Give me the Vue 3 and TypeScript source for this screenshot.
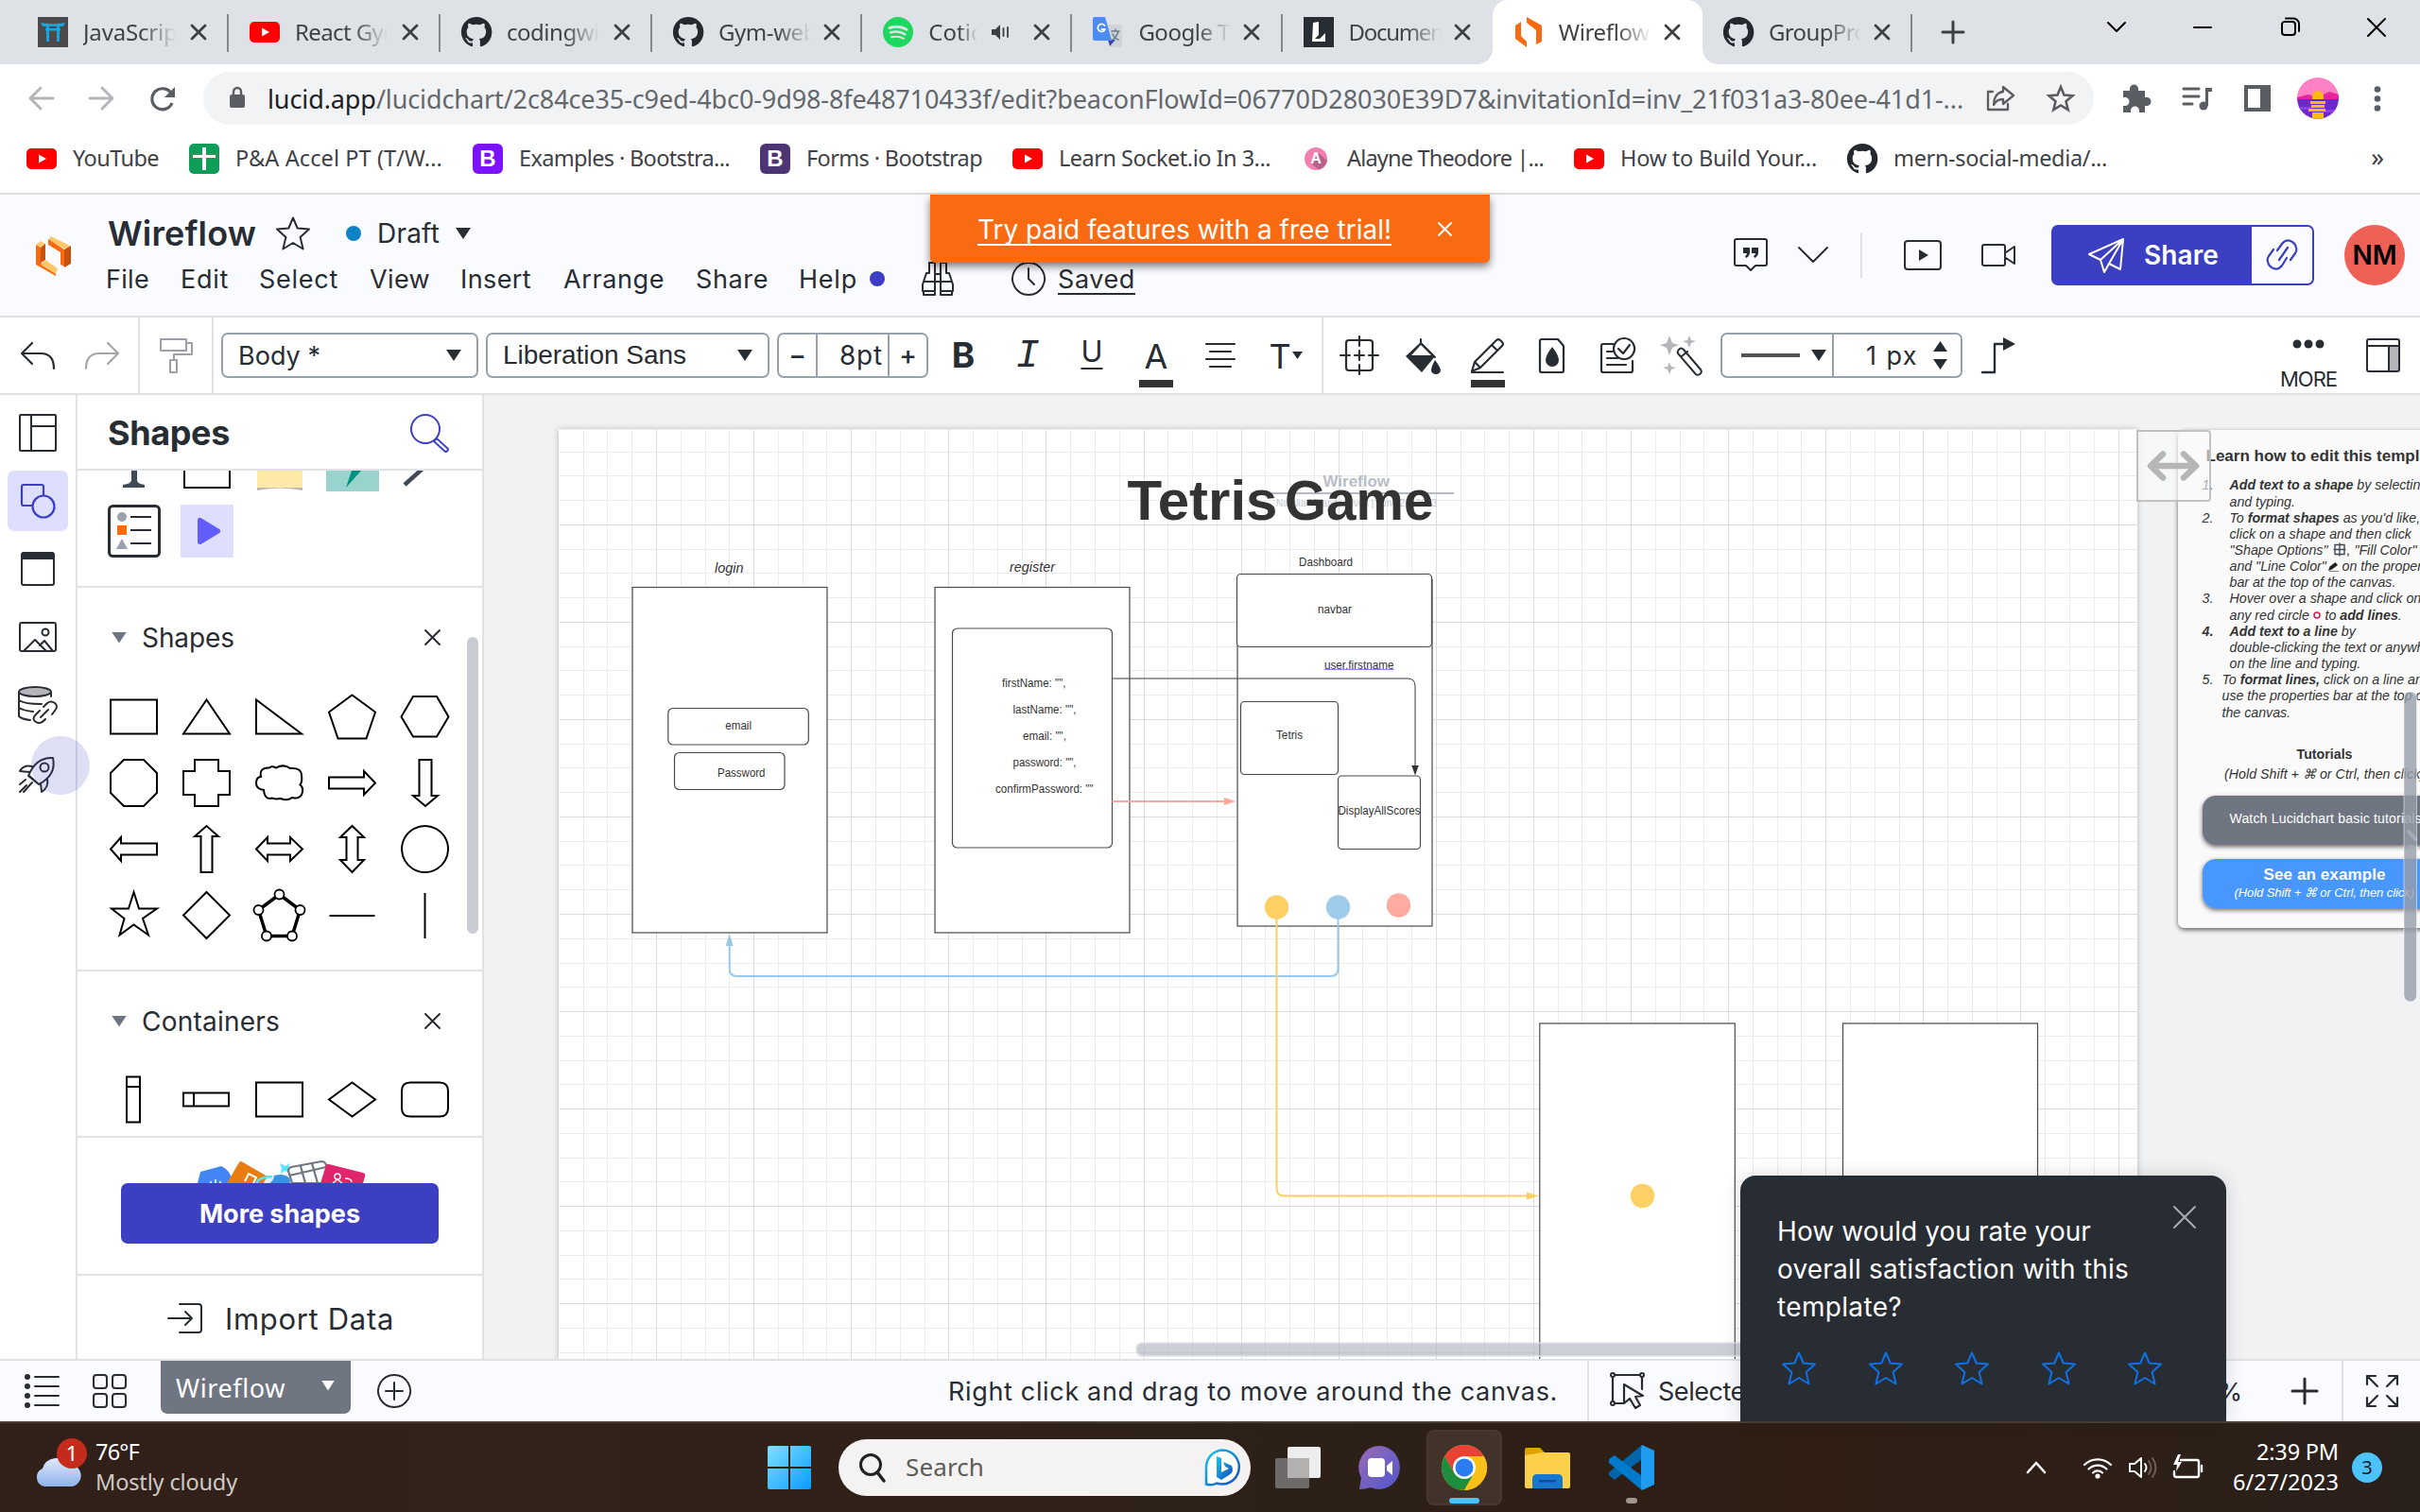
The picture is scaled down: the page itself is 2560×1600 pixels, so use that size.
<script setup lang="ts">
import { h, type FunctionalComponent, type ObjectDirective } from 'vue'

/* Tracks a label out (or in) so that it fills its designed width with any fallback font. */
const vFit: ObjectDirective<HTMLElement, number> = {
  mounted(el, { value }) {
    const chars = (el.textContent ?? '').trim().length
    const natural = el.getBoundingClientRect().width
    el.style.letterSpacing = `${(value - natural) / chars}px`
  },
}

const stroke = (d: string, w = 2, c = '#282c33') =>
  `<path fill="none" stroke="${c}" stroke-width="${w}" stroke-linejoin="round" stroke-linecap="round" d="${d}"/>`
const STAR = 'M18 1.500l4.700 11 12.300 1-9.400 8.500 3 12.500L18 28l-10.600 6.500 3-12.500L1 13.500l12.300-1z'

const icons: Record<string, string> = {
  github: '<path fill="#24292f" d="M16 0a16 16 0 0 0-5.100 31.200c.8.1 1.100-.4 1.100-.8v-3c-4.500 1-5.400-1.900-5.400-1.900-.7-1.800-1.800-2.300-1.800-2.300-1.400-1 .1-1 .1-1 1.600.1 2.500 1.700 2.500 1.700 1.400 2.400 3.700 1.700 4.600 1.300.2-1 .6-1.700 1-2.100-3.500-.4-7.300-1.800-7.300-7.900 0-1.700.6-3.200 1.700-4.300-.2-.4-.7-2 .1-4.200 0 0 1.300-.4 4.400 1.600a15 15 0 0 1 8 0c3.100-2 4.400-1.600 4.400-1.600.9 2.200.3 3.800.2 4.200 1 1.100 1.600 2.600 1.600 4.300 0 6.200-3.700 7.500-7.300 7.900.6.500 1.100 1.500 1.100 3v4.400c0 .4.3.9 1.100.8A16 16 0 0 0 16 0z"/>',
  youtube: '<rect y="5" width="32" height="22" rx="5" fill="#f00"/><path fill="#fff" d="M13 11.500v9l8-4.500z"/>',
  torii: '<rect width="32" height="32" fill="#4c4a4b"/><path fill="#16a5e0" d="M3 6c8 1.500 18 1.500 26 0l-2 4H5zM8 12h16v2.500H8zM9 10h3v16H9zM20 10h3v16h-3z"/>',
  spotify: '<circle cx="16" cy="16" r="16" fill="#1ed760"/>' +
    stroke('M7 11.500c6-1.800 13-1.200 18 1.800', 3, '#dee1e6') + stroke('M8 16.500c5-1.500 11-.8 15.500 1.800', 2.500, '#dee1e6') + stroke('M9 21.300c4.500-1.200 9-.7 13 1.500', 2, '#dee1e6'),
  translate: '<path fill="#d0d3d9" d="M12 8h17a2 2 0 0 1 2 2v20a2 2 0 0 1-2 2H19z"/><path fill="#3949ab" d="M16 24h8l-6 7z"/><path fill="#4c8bf5" d="M2 0h11l7 25H2a2 2 0 0 1-2-2V2a2 2 0 0 1 2-2z"/>' +
    stroke('M12.500 9a4 4 0 1 0 .5 4H9.500', 1.800, '#fff') + stroke('M20 15h8M24 13v2M27 15c-1 4-3 7-6 9M21 18c1 2 3 5 6 6', 1.500, '#6b7c8c'),
  docs: '<rect width="32" height="32" fill="#282c33"/><path fill="#fff" d="M10 6l6-1v14l-4 4h11v3H9z"/><path fill="#fff" d="M17 23l6-6v6z"/>',
  lucidTab: '<path fill="#f96b13" d="M2 9l6-4v15l6 6v6L2 23zM14 0l16 9v17l-6 3V14L14 6z"/>',
  sheets: '<rect width="32" height="32" rx="5" fill="#0f9d58"/><path fill="#fff" d="M4 12h10V4h4v8h10v3H18v13h-4V15H4z"/>',
  bs1: '<rect width="32" height="32" rx="6" fill="#7c12fb"/>',
  bs2: '<rect width="32" height="32" rx="6" fill="#4d3574"/>',
  alayne: '<circle cx="12" cy="12" r="12" fill="#f180b0"/><path fill="#b9608c" d="M15 6l9 8a12 12 0 0 1-9 9.500L8 18z"/>',
  tabX: stroke('M3 3l14 14M17 3L3 17', 2.800, '#3c4043'),
  audio: '<path fill="#3c4043" d="M0 7h4l5-5v16l-5-5H0z"/>' + stroke('M12.500 6v8M17 5v10', 1.800, '#3c4043'),
  plus: stroke('M12 1v22M1 12h22', 3, '#3c4043'),
  chevWin: stroke('M1 2l9 9 9-9', 2, '#000'),
  min: stroke('M1 2h18', 2, '#000'),
  restore: stroke('M2 7a3 3 0 0 1 3-2h8a3 3 0 0 1 3 3v8a3 3 0 0 1-3 3H5a3 3 0 0 1-3-3zM6 1.500h8a6 6 0 0 1 6 6V15', 2, '#000'),
  winX: stroke('M1 1l18 18M19 1L1 19', 2, '#000'),
  back: stroke('M26 13H3M13 2L2 13l11 11', 3, '#b4b6b9'),
  fwd: stroke('M1 13h23M14 2l11 11-11 11', 3, '#b4b6b9'),
  reload: '<path fill="none" stroke="#5a5d61" stroke-width="3.200" d="M23.500 8.500A11 11 0 1 0 24 18"/><path fill="#5a5d61" d="M27 1v11H16z"/>',
  lock: '<rect x="0" y="8" width="16" height="14" rx="2" fill="#5a5d61"/><path fill="none" stroke="#5a5d61" stroke-width="2.400" d="M4 9V5a4 4 0 0 1 8 0v4"/>',
  share: stroke('M7 7H2v19h21v-6', 2.300, '#5a5d61') + stroke('M18 2l11 9-11 9v-5c-5 0-8 2-10 6 0-7 3-13 10-14z', 2.300, '#5a5d61'),
  starUrl: '<path fill="none" stroke="#5a5d61" stroke-width="2.600" d="M15 3l3.500 8.500 9 .7-7 6 2.200 9L15 22.500l-7.700 4.700 2.200-9-7-6 9-.7z"/>',
  puzzle: '<path fill="#5a5d61" d="M2 8h7V6a4.500 4.500 0 0 1 9 0v2h7v7h2a4.500 4.500 0 0 1 0 9h-2v7h-6v-2a4.500 4.500 0 0 0-9 0v2H2v-7h2a4.500 4.500 0 0 0 0-9H2z"/>',
  media: stroke('M2 3h16M2 11h16M2 19h9', 3, '#5a5d61') + '<circle cx="23" cy="21" r="4.500" fill="#5a5d61"/><path fill="#5a5d61" d="M25 2h7v4h-4v15h-3z"/>',
  side: '<path fill="#5a5d61" fill-rule="evenodd" d="M0 0h28v28H0zM4 4v20h13V4z"/>',
  avatar: '<clipPath id="av"><circle cx="22" cy="22" r="22"/></clipPath><g clip-path="url(#av)"><path fill="#ff80c4" d="M0 0h44v24H0z"/><path fill="#e5239a" d="M0 21l12-3 10 3 12-6 10 3v6H0z"/><path fill="#6d28c9" d="M0 23h44v21H0z"/><path fill="#8f3fe0" d="M0 31h16v3H0zM28 34h16v3H28z"/><path fill="#fdb813" d="M16 23v-3a6 6 0 0 1 12 0v3zM14 25h16v3H14zM15 29h14v3H15zM12 33h18v3H12zM16 37h12v7H16z"/></g>',
  dotsV: '<g fill="#5a5d61"><circle cx="4" cy="3.500" r="3.300"/><circle cx="4" cy="13.500" r="3.300"/><circle cx="4" cy="23.500" r="3.300"/></g>',
  lucid: '<path fill="#ffc76b" d="M0 9l5-4 5 3-5 4zM16 0l20 10-4 4L13 4z"/><path fill="#f96b13" d="M0 9l5 3v16l-5-4zM13 3l17 11v18l-4-2V17L13 9zM5 28l16 8v6L0 30v-6z"/><path fill="#c9500a" d="M5 12l5-4v17l-5 3zM30 14l7-4v19l-7 4z"/><path fill="#ffc76b" d="M10 25l13 9-2 6L5 30z"/>',
  star: stroke(STAR),
  starBlue: stroke(STAR, 2, '#1071e5'),
  binoculars: stroke('M9 2h6v30H2V25l4-12h3zM9 2v11M27 2h-6v30h13V25l-4-12h-3zM27 2v11M15 14h6M15 22h6M3 22h30M15 33v3H3v-4M21 33v3h12v-4'),
  clock: stroke('M18 1a17 17 0 1 0 .1 0M18 7v11l6 6'),
  bannerX: stroke('M2 2l13 13M15 2L2 15', 2, '#fff'),
  comment: stroke('M3 1h30q2 0 2 2v24q0 2-2 2H23l-5 5-5-5H3q-2 0-2-2V3q0-2 2-2z') + '<path fill="#282c33" d="M10 10h7v5q0 4-4 6l-1-2q2-1 2-3h-4zM19 10h7v5q0 4-4 6l-1-2q2-1 2-3h-4z"/>',
  chev: stroke('M1 1l15 15L31 1'),
  present: stroke('M4 1h32q3 0 3 3v24q0 3-3 3H4q-3 0-3-3V4q0-3 3-3z') + '<path fill="#282c33" d="M16 10l10 6-10 6z"/>',
  video: stroke('M3 1h20q2 0 2 2v18q0 2-2 2H3q-2 0-2-2V3q0-2 2-2zM26 9l9-6v18l-9-6'),
  plane: stroke('M38 2L2 18l12 6zM38 2L14 24l4 13 5-9zM38 2l-3 32-12-6z', 2, '#fff'),
  link: stroke('M15 23l9-13M13 13l5-7q4-5 9-3t6 7q1 3-1 6l-5 7M23 21l-5 8q-4 5-9 3t-6-7q-1-3 1-6l5-7', 2.200, '#3c3fc1'),
  undo: stroke('M12 2L1 13l11 11M2 13h19q14 0 14 16', 2.200),
  redo: stroke('M24 2l11 11-11 11M34 13H15Q1 13 1 29', 2.200, '#a3a6ab'),
  painter: stroke('M2 2h27v12H2zM29 6h6v12H16v6M12 24h7v13h-7z', 2, '#9c9fa5'),
  align: stroke('M2 3h30M6 11h22M2 19h30M6 27h22', 2.200),
  shapeOpt: stroke('M9 4h22q3 0 3 3v26q0 3-3 3H9q-3 0-3-3V7q0-3 3-3zM20 0v10M20 30v10M0 20h10M30 20h10M15 20h10M20 15v10', 2.200),
  fill: stroke('M16 2v12M16 6l15 15', 2) + '<path fill="#282c33" d="M0 20L16 5l15 15-14 17zM31 24q6 8 6 11a5 4 0 0 1-10 0q0-4 4-11z"/><path fill="#fff" d="M16 8l11 11H6z"/>',
  pencil: stroke('M2 36l3-10L28 3q2-2 4 0l2 2q2 2 0 4L11 32zM5 26l6 6M23 8l6 6M2 37h33', 2.200),
  page: stroke('M3 1h17l6 7v26q0 2-2 2H3q-2 0-2-2V3q0-2 2-2z', 2.200) + '<path fill="#282c33" d="M14 9q7 9 7 14a7 7 0 0 1-14 0q0-5 7-14z"/>',
  check: stroke('M15 8H4q-2 0-2 2v26q0 2 2 2h29q2 0 2-2V26M8 16h6M8 23h12M8 30h20', 2.200) + stroke('M26 2a11 11 0 1 0 .1 0M20 13l5 5 7-9', 2.200),
  wand: '<path fill="#b4b6ba" d="M9 0l3 8 7 2-7 3-3 8-3-8-7-3 7-2zM30 0l2 5 5 1-5 2-2 5-2-5-5-2 5-1zM9 28l2 5 5 1-5 2-2 5-2-5-5-2 5-1z"/>' + stroke('M19 15q2-3 5 0l18 21q2 3-1 5t-5-1L18 19q-1-2 1-4zM22 22l6-5', 2),
  line: '<path fill="#555" d="M0 0h62v4H0z"/>',
  spin: '<path fill="#282c33" d="M7.500 0L15 11H0zM0 19h15L7.500 30z"/>',
  elbow: stroke('M2 37h13V7h12', 2.400) + '<path fill="#282c33" d="M24 0l13 7-13 7z"/>',
  dots3: '<g fill="#282c33"><circle cx="5" cy="5" r="4.500"/><circle cx="17" cy="5" r="4.500"/><circle cx="29" cy="5" r="4.500"/></g>',
  panel: '<path fill="#b4b6ba" d="M25 8h10v27H25z"/>' + stroke('M3 1h30q2 0 2 2v30q0 2-2 2H3q-2 0-2-2V3q0-2 2-2zM1 8h34M24 8v27'),
  layout: stroke('M3 1h35q1 0 1 1v36q0 1-1 1H2q-1 0-1-1V2q0-1 1-1zM13 1v38M13 13h26'),
  shapes: stroke('M24 12V3q0-2-2-2H3Q1 1 1 3v18q0 2 2 2h9', 2.200, '#3c3fc1') + '<circle cx="24" cy="24" r="11.500" fill="none" stroke="#3c3fc1" stroke-width="2.200"/>',
  window: stroke('M3 1h30q2 0 2 2v30q0 2-2 2H3q-2 0-2-2V3q0-2 2-2z') + '<path fill="#282c33" d="M1 1h34v7H1z"/>',
  image: stroke('M3 1h34q2 0 2 2v26q0 2-2 2H3q-2 0-2-2V3q0-2 2-2zM5 31l12-12 12 12M22 25l5-5 9 11') + '<circle cx="28" cy="11" r="3.500" fill="none" stroke="#282c33" stroke-width="2"/>',
  data: '<ellipse cx="18" cy="6" rx="17" ry="5" fill="#b4b6ba"/>' + stroke('M1 6v26q3 3 12 4M35 6v5M1 6a17 5 0 0 0 34 0a17 5 0 0 0-34 0M1 15q6 4 24 4M1 23q5 3 15 4M24 33l8-8M27 22l4-4q4-3 8 0t0 8l-3 4M29 35q-5 6-10 3t0-8l4-4'),
  rocket: stroke('M36 2q4 18-15 28l-11-9Q18 1 36 2zM14 11Q5 9 1 16l10 1M23 29l1 9q8-5 6-14M11 21l10 9M7 25l-6 5M14 28L5 38M8 31l-7 7') + '<circle cx="27" cy="12" r="4.500" fill="none" stroke="#282c33" stroke-width="2"/>',
  search: '<circle cx="16" cy="16" r="15" fill="none" stroke="#3c3fc1" stroke-width="2"/>' + stroke('M25 29l3-3 12 11q0 3-3 3z', 1.800, '#3c3fc1'),
  x: stroke('M1 1l15 15M16 1L1 16'),
  xLight: stroke('M1 1l22 22M23 1L1 23', 2, '#a9adb4'),
  import: stroke('M12 1h20q3 0 3 3v24q0 3-3 3H12M0 16h24M18 9l7 7-7 7'),
  list: stroke('M11 3h25M11 13h25M11 23h25M11 33h25') + '<g fill="#282c33"><circle cx="3" cy="3" r="3"/><circle cx="3" cy="13" r="3"/><circle cx="3" cy="23" r="3"/><circle cx="3" cy="33" r="3"/></g>',
  grid4: stroke('M4 1h8q3 0 3 3v8q0 3-3 3H4q-3 0-3-3V4q0-3 3-3zM24 1h8q3 0 3 3v8q0 3-3 3h-8q-3 0-3-3V4q0-3 3-3zM4 21h8q3 0 3 3v8q0 3-3 3H4q-3 0-3-3v-8q0-3 3-3zM24 21h8q3 0 3 3v8q0 3-3 3h-8q-3 0-3-3v-8q0-3 3-3z'),
  plusCircle: stroke('M18 1a17 17 0 1 0 .1 0M18 9v18M9 18h18'),
  select: stroke('M5 3h26M3 5v26M34 5v13M5 33h9M15 13v20l6-5 6 10 5-3-5-9 8-1z', 2.200) + '<g fill="#fafbfe" stroke="#282c33" stroke-width="2"><circle cx="3" cy="3" r="2"/><circle cx="34" cy="3" r="2"/><circle cx="3" cy="33" r="2"/></g>',
  zoomIn: stroke('M14 1v26M1 14h26', 3),
  full: stroke('M13 13L2 2M2 11V2h9M23 13L34 2M25 2h9v9M13 23L2 34M2 25v9h9M23 23l11 11M25 34h9v-9', 2.200),
  windows: '<linearGradient id="wg" x1="0" y1="0" x2="1" y2="1"><stop stop-color="#7fe0ff"/><stop offset="1" stop-color="#0a9bff"/></linearGradient><path fill="url(#wg)" d="M2 0h20v22H0V2q0-2 2-2zM24 0h20q2 0 2 2v20H24zM0 24h22v22H2q-2 0-2-2zM24 24h22v20q0 2-2 2H24z"/>',
  glass: '<circle cx="15" cy="12" r="10.500" fill="none" stroke="#222" stroke-width="3"/>' + stroke('M22 20l7 9', 3.500, '#222'),
  bing: '<linearGradient id="bg" x1="0" y1="0" x2="1" y2="1"><stop stop-color="#17c8ee"/><stop offset="1" stop-color="#1747b8"/></linearGradient><path fill="#fff" stroke="url(#bg)" stroke-width="2.500" d="M20 1.500a18 18 0 1 1-7 35q-5 3-11 1V20A18 18 0 0 1 20 1.500z"/><path fill="url(#bg)" d="M13 8l5 2v15l8-4-4-2-2-5 9 4q3 7-3 10l-8 5-5-3z"/>',
  taskview: '<rect x="13" width="35" height="33" rx="2" fill="#ededed"/><rect y="12" width="36" height="32" rx="2" fill="#6d6a69"/><path fill="#b3b1b0" d="M13 12h23v21H13z"/>',
  chat: '<linearGradient id="cg" x1="0" y1="0" x2="1" y2="1"><stop stop-color="#9a6cb4"/><stop offset="1" stop-color="#5156cf"/></linearGradient><path fill="url(#cg)" d="M22 0a22 23 0 1 1-10 44q-6 2-12 2l2-12A22 23 0 0 1 22 0z"/><rect x="9" y="13" width="18" height="20" rx="4" fill="#fff"/><path fill="#fff" d="M29 21l6-5v15l-6-5z"/>',
  chrome: '<circle cx="24" cy="24" r="24" fill="#fbc116"/><path fill="#ea4335" d="M3.200 12A24 24 0 0 1 44.800 12H24L13.600 30z"/><path fill="#1e8e3e" d="M3.200 12A24 24 0 0 0 24 48l10.400-18H13.600z"/><path fill="#fbc116" d="M44.800 12A24 24 0 0 1 24 48l10.400-18L24 12z"/><circle cx="24" cy="24" r="12" fill="#fff"/><circle cx="24" cy="24" r="9.500" fill="#2a7df0"/>',
  folder: '<path fill="#e0a200" d="M2 0h14l5 5v5H0V2q0-2 2-2z"/><path fill="#fdd04a" d="M0 8l18-3h28q2 0 2 2v34q0 2-2 2H2q-2 0-2-2z"/><path fill="#1677cf" d="M8 43V33q0-5 5-5h22q5 0 5 5v10z"/><path fill="#0a4f97" d="M15 34h18v2.500H15z"/>',
  vscode: '<path fill="#0065a9" d="M35 0v15L6 37l-6-5V29z"/><path fill="#007acc" d="M0 19v-4l6-4 29 22v15z"/><path fill="#1f9cf0" d="M35 0l13 6v36l-13 6-1-4V4z"/>',
  weather: '<circle cx="34" cy="15" r="12" fill="#f08a1c"/><linearGradient id="wc" x1="0" y1="0" x2="0" y2="1"><stop stop-color="#dfe9fb"/><stop offset="1" stop-color="#8fb2ee"/></linearGradient><path fill="url(#wc)" d="M10 39a10 10 0 0 1-2-19A15 15 0 0 1 35 16a11.500 11.500 0 0 1 4 23z"/>',
  chevUp: stroke('M2 12l9-10 9 10', 2.600, '#fff'),
  wifi: stroke('M2 9a20 20 0 0 1 28 0M6.500 13.500a13.500 13.500 0 0 1 19 0M11 17.500a7 7 0 0 1 10 0', 2.200, '#fff') + '<circle cx="16" cy="21" r="2.600" fill="#fff"/>',
  volume: stroke('M2 8h5l7-6v20l-7-6H2zM18 8q3 4 0 8', 2, '#fff') + stroke('M22 5q5 7 0 14M26 2q7 10 0 20', 2, '#6b5d54'),
  battery: stroke('M9 6h17q2 0 2 2v14q0 2-2 2H4q-2 0-2-2v-4M31 12v6', 2.400, '#fff') + '<path fill="#fff" d="M6 0l-5 11h4l-1 7 6-10H6l3-8z"/>',
}

const Ic: FunctionalComponent<{ n: string; w: number; ht?: number }> = (p) =>
  h('svg', { width: p.w, height: p.ht ?? p.w, viewBox: `0 0 ${p.w} ${p.ht ?? p.w}`, innerHTML: icons[p.n] })
Ic.props = ['n', 'w', 'ht']

const tabs = [
  { t: 'JavaScript', i: 'torii', w: 108 }, { t: 'React Gym', i: 'youtube', w: 115 }, { t: 'codingwit', i: 'github', w: 106 },
  { t: 'Gym-web', i: 'github', w: 104 }, { t: 'Cotidi', i: 'spotify', w: 66, audio: true }, { t: 'Google Tr', i: 'translate', w: 105 },
  { t: 'Documen', i: 'docs', w: 100 }, { t: 'Wireflow:', i: 'lucidTab', w: 102, active: true }, { t: 'GroupProj', i: 'github', w: 110 },
]
const bookmarks = [
  { t: 'YouTube', i: 'youtube', w: 91 }, { t: 'P&A Accel PT (T/W...', i: 'sheets', w: 219 }, { t: 'Examples · Bootstra...', i: 'bs1', w: 223, b: true },
  { t: 'Forms · Bootstrap', i: 'bs2', w: 186, b: true }, { t: 'Learn Socket.io In 3...', i: 'youtube', w: 224 },
  { t: 'Alayne Theodore |...', i: 'alayne', w: 208, a: true }, { t: 'How to Build Your...', i: 'youtube', w: 208 }, { t: 'mern-social-media/...', i: 'github', w: 226 },
]
const menu: [string, number][] = [['File', 46], ['Edit', 51], ['Select', 84], ['View', 64], ['Insert', 75], ['Arrange', 107], ['Share', 77], ['Help', 62]]

const shapePaths = [
  'M3 9.500h49v36H3z', 'M27.500 9.500l24.500 36H3z', 'M3 9.500v36h48z', 'M27.500 4.500l24.500 18-9.500 28h-30L3 22.500z', 'M15 6h25l12.500 21.500L40 48.500H15L2.500 27.500z',
  'M17 3h21l14 14v21L38 52H17L3 38V17z', 'M15 3h25v12h12v25H40v12H15V40H3V15h12z',
  'M8 21Q6 11 17 11.500Q19 9 24 11.500Q32 7 39 12Q51 11 51 20Q52 26 49.500 29.500Q54 33 51 40Q48 45 41 43Q36 47 29 44Q22 45 20 43.500Q12 46 11 35Q3 34 3 28Q3 21 8 21z',
  'M3 21.500h37V15l12 12.500L40 40v-6.500H3z', 'M21.500 3h13v38H41L28 52 15 41h6.500z',
  'M52 21.500H14V15L3 27.500 14 40v-6.500h38z', 'M21.500 52h12V14H40L27.500 3 15 14h6.500z', 'M3 27.500L15 15v6.500h24V15l13 12.500L39 40v-6.500H15V40z',
  'M27.500 3L40 15h-6.500v24H40L27.500 52 15 39h6.500V15H15z', 'M27.500 3a24.500 24.500 0 1 0 .1 0z',
  'M27.500 3l5.500 17.500h19L37 31l6 17.500-15.500-11-15 11 5-17.500L4 20.500h18z', 'M27.500 3L52 27.500 27.500 52 3 27.500z',
  '', 'M3.500 28h48', 'M27.500 4v48',
]
const containerPaths = ['M20 3.500h14v48H20zM20 14h14', 'M3 20.500h48v14H3zM14 20.500v14', 'M3 9.500h49v36H3z', 'M27.500 9.500L52 27.500l-24.500 18L3 27.500z', 'M12 9.500h31q9 0 9 9v18q0 9-9 9H12q-9 0-9-9v-18q0-9 9-9z']
const polyNodes: [number, number][] = [[27.500, 5.500], [49.500, 22], [41, 49.500], [14, 49.500], [5.500, 22]]

const range = (n: number) => Array.from({ length: n }, (_, k) => k + 1)
const gridV = range(64).map((k) => ({ p: Math.floor(591.4 + k * 25.775) + 0.5, major: k % 4 === 0 }))
const gridH = range(38).map((k) => ({ p: Math.floor(452.3 + k * 25.76) + 0.5, major: k % 4 === 0 }))

interface Label { t: string; x: number; y: number; w: number; c?: string }
const labels: Label[] = [
  { t: 'login', x: 756, y: 605.5, w: 30.5, c: 'it big' }, { t: 'register', x: 1068, y: 605, w: 48, c: 'it big' },
  { t: 'email', x: 767.3, y: 772, w: 27.7 }, { t: 'Password', x: 759, y: 821.5, w: 50.5 },
  { t: 'firstName: "",', x: 1060, y: 726.5, w: 67.5 }, { t: 'lastName: "",', x: 1071.5, y: 755, w: 67 }, { t: 'email: "",', x: 1082, y: 782.5, w: 46 },
  { t: 'password: "",', x: 1071.5, y: 810.5, w: 67 }, { t: 'confirmPassword: ""', x: 1053, y: 838.5, w: 103.5 },
  { t: 'Dashboard', x: 1374, y: 598.5, w: 57 }, { t: 'navbar', x: 1394, y: 649, w: 36 }, { t: 'user.firstname', x: 1401, y: 707.5, w: 73.5 },
  { t: 'Tetris', x: 1350, y: 782, w: 28 }, { t: 'DisplayAllScores', x: 1415.5, y: 862, w: 87 },
]
const tip = (n: number) => 518.4 + n * 17.15
</script>

<template>
  <div class="screen">
    <div class="tabstrip">
      <div v-for="tab in tabs" :key="tab.t" class="tab" :class="{ active: tab.active }">
        <Ic :n="tab.i" :w="32" />
        <span class="tab-title" :class="{ short: tab.audio }"><span v-fit="tab.w">{{ tab.t }}</span></span>
        <Ic v-if="tab.audio" class="audio" n="audio" :w="19" :ht="20" />
        <Ic n="tabX" :w="20" />
      </div>
      <Ic class="newtab" n="plus" :w="24" />
      <div class="winctl">
        <Ic n="chevWin" :w="20" :ht="14" /><Ic n="min" :w="20" :ht="4" /><Ic n="restore" :w="22" /><Ic n="winX" :w="20" />
      </div>
    </div>

    <div class="address">
      <Ic n="back" :w="28" :ht="26" /><Ic n="fwd" :w="28" :ht="26" /><Ic n="reload" :w="28" :ht="27" />
      <div class="omnibox">
        <Ic n="lock" :w="16" :ht="24" />
        <span v-fit="1794" class="url"><b>lucid.app</b>/lucidchart/2c84ce35-c9ed-4bc0-9d98-8fe48710433f/edit?beaconFlowId=06770D28030E39D7&amp;invitationId=inv_21f031a3-80ee-41d1-...</span>
        <Ic class="share-ic" n="share" :w="31" :ht="28" /><Ic n="starUrl" :w="30" />
      </div>
      <div class="extensions">
        <Ic n="puzzle" :w="32" /><Ic n="media" :w="34" :ht="27" /><Ic n="side" :w="28" /><Ic n="avatar" :w="44" /><Ic n="dotsV" :w="8" :ht="27" />
      </div>
    </div>

    <div class="bookmarks">
      <div v-for="b in bookmarks" :key="b.t" class="bm">
        <span class="fav" :class="{ small: b.a }"><Ic :n="b.i" :w="b.a ? 24 : 32" /><i v-if="b.b || b.a">{{ b.b ? 'B' : 'A' }}</i></span>
        <span v-fit="b.w">{{ b.t }}</span>
      </div>
      <span class="more-bm">»</span>
    </div>

    <header class="app-head">
      <Ic class="logo" n="lucid" :w="37" :ht="42" />
      <div class="doc">
        <div class="title-row">
          <h1><span v-fit="157">Wireflow</span></h1><Ic n="star" :w="36" /><span class="dot"></span><span v-fit="66">Draft</span><span class="tri"></span>
        </div>
        <nav class="menu">
          <span v-for="m in menu" :key="m[0]"><span v-fit="m[1]">{{ m[0] }}</span></span>
          <span class="dot violet"></span><Ic n="binoculars" :w="36" :ht="38" /><Ic n="clock" :w="36" />
          <span class="saved"><span v-fit="82">Saved</span></span>
        </nav>
      </div>
      <div class="head-right">
        <Ic n="comment" :w="36" /><Ic n="chev" :w="32" :ht="18" /><span class="vsep"></span><Ic n="present" :w="40" :ht="32" /><Ic n="video" :w="36" :ht="24" />
        <div class="share-btn"><div class="share-main"><Ic n="plane" :w="40" :ht="38" /><span v-fit="79">Share</span></div><div class="share-link"><Ic n="link" :w="36" /></div></div>
        <div class="user">NM</div>
      </div>
      <div class="banner"><span v-fit="438" class="promo">Try paid features with a free trial!</span><Ic n="bannerX" :w="17" /></div>
    </header>

    <div class="toolbar">
      <div class="group g1"><Ic n="undo" :w="37" :ht="31" /><Ic n="redo" :w="37" :ht="31" /></div>
      <div class="group g2"><Ic n="painter" :w="36" :ht="38" /></div>
      <div class="group g3">
        <div class="select body-sel"><span v-fit="87">Body *</span><span class="tri"></span></div>
        <div class="select font-sel"><span v-fit="194">Liberation Sans</span><span class="tri"></span></div>
        <div class="stepper"><b>−</b><span class="pt"><span v-fit="46">8pt</span></span><b>+</b></div>
        <span class="glyph bold">B</span><span class="glyph ital">I</span><span class="glyph under">U</span><span class="glyph inked">A</span>
        <Ic class="align" n="align" :w="34" :ht="30" /><span class="glyph tee">T</span><span class="tri tiny"></span>
      </div>
      <div class="group g4">
        <Ic n="shapeOpt" :w="40" /><Ic n="fill" :w="38" /><span class="inked pen"><Ic n="pencil" :w="38" /></span><Ic n="page" :w="28" :ht="37" /><Ic n="check" :w="40" /><Ic n="wand" :w="46" :ht="43" />
        <div class="linebox"><div class="linestyle"><Ic n="line" :w="62" :ht="4" /><span class="tri"></span></div><div class="px"><span v-fit="55">1 px</span><Ic n="spin" :w="15" :ht="30" /></div></div>
        <Ic class="elbow" n="elbow" :w="38" />
        <div class="more"><Ic n="dots3" :w="34" :ht="10" /><span v-fit="60">MORE</span></div>
        <Ic class="panel-ic" n="panel" :w="36" />
      </div>
    </div>

    <main class="work">
      <aside class="rail">
        <Ic n="layout" :w="40" />
        <div class="chosen"><Ic n="shapes" :w="37" /></div>
        <Ic n="window" :w="36" /><Ic n="image" :w="40" :ht="32" /><Ic n="data" :w="43" :ht="42" /><Ic n="rocket" :w="40" />
        <span class="pulse"></span>
      </aside>
      <aside class="panel">
        <div class="panel-head"><h2><span v-fit="129">Shapes</span></h2><Ic n="search" :w="41" /></div>
        <div class="basics">
          <svg width="428" height="122" viewBox="82 498 428 122">
            <path fill="#3f4a56" d="M139 498h6v10q0 4 8 5v3h-23v-3q9-1 9-5z" /><path d="M195 490h48v26h-48z" fill="#fff" stroke="#000" stroke-width="2" />
            <path fill="#b9b9b0" d="M272 514h48v5q-24-5-48 0z" /><path fill="#ffe9a6" d="M272 498h48v18h-48z" />
            <path fill="#99d3cd" d="M345 498h56v22h-56z" /><path fill="#009281" d="M372 498h10l-16 18z" /><path stroke="#3f4a56" stroke-width="4.500" d="M428 513l19-17" />
            <rect x="115.500" y="535.500" width="53" height="53" rx="4" fill="#fff" stroke="#282c33" stroke-width="3" />
            <circle cx="129" cy="547" r="5" fill="#9ba1ab" /><path fill="#f96b13" d="M124 556h10v10h-10z" /><path fill="#9ba1ab" d="M129 570l6 11h-12z" />
            <path stroke="#282c33" stroke-width="2" d="M138 547h22M138 561h22M138 575h22" />
            <path fill="#dedeff" d="M191 534h56v56h-56z" /><path fill="#635dff" stroke="#635dff" stroke-width="5" stroke-linejoin="round" d="M211.500 550.500v23L230.500 562z" />
          </svg>
        </div>
        <section class="lib">
          <div class="lib-head"><span class="tri grey"></span><span class="lib-name"><span v-fit="98">Shapes</span></span><Ic n="x" :w="17" /></div>
          <div class="shape-grid">
            <svg v-for="(d, i) in shapePaths" :key="i" width="55" height="55">
              <path v-if="d" :d="d" fill="none" stroke="#000" stroke-width="2" />
              <template v-else><path d="M27.500 5.500l22 16.500-8.500 27.500H14L5.500 22z" fill="none" stroke="#000" stroke-width="3.500" /><circle v-for="p in polyNodes" :key="p[0]" :cx="p[0]" :cy="p[1]" r="5" fill="#fff" stroke="#000" stroke-width="1.800" /></template>
            </svg>
          </div>
          <span class="thumb"></span>
        </section>
        <section class="lib containers">
          <div class="lib-head"><span class="tri grey"></span><span class="lib-name"><span v-fit="146">Containers</span></span><Ic n="x" :w="17" /></div>
          <div class="shape-grid"><svg v-for="d in containerPaths" :key="d" width="55" height="55"><path :d="d" fill="none" stroke="#000" stroke-width="2" /></svg></div>
        </section>
        <div class="more-shapes">
          <svg width="180" height="25" viewBox="209 1227 180 25">
            <path fill="#4285f4" d="M210 1252l3-12 22-6q9 3 13 18z" /><path stroke="#fff" stroke-width="1.500" d="M224 1250v4M229 1248v5M234 1250v4" />
            <path fill="#e87d0d" d="M241 1252l13-22q2-2 4 0l26 15v7z" /><path fill="none" stroke="#fff" stroke-width="2" d="M260 1250l4-8 8 4-3 6" />
            <path fill="#50e6ff" d="M297 1231l6 3 4-3-1 6 2 4-6-2-4 3 1-6z" /><path fill="#3794e4" d="M281 1252q8-10 18-9t9 9z" /><path fill="#eee" d="M280 1252q2-8 11-7-1 5-5 7z" /><path fill="none" stroke="#50e6ff" stroke-width="2.500" d="M273 1252q0-6 16-7" />
            <path fill="#fff" stroke="#6f7681" stroke-width="2.200" d="M310 1252l-4-13q0-3 3-4l32-6q4 0 5 4l4 19zM307 1244l39-9M319 1234l5 18M331 1231l6 21" />
            <path fill="#e0246e" d="M340 1252l6-19q1-2 3-1l36 9q3 1 2 4l-2 7z" /><circle cx="358" cy="1245" r="3" fill="none" stroke="#fff" stroke-width="1.500" /><path fill="none" stroke="#fff" stroke-width="1.500" d="M358 1248l-5 4M358 1248l5 4M366 1247q7 0 7 4" />
          </svg>
          <button><span v-fit="170">More shapes</span></button>
        </div>
        <div class="import"><Ic n="import" :w="36" :ht="32" /><span v-fit="179">Import Data</span></div>
      </aside>

      <div class="canvas">
        <svg width="2048" height="1020" viewBox="512 418 2048 1020">
          <defs>
            <filter id="soft" x="-10%" y="-10%" width="120%" height="130%"><feDropShadow dx="0" dy="2" stdDeviation="2.500" flood-color="#000" flood-opacity="0.600" /></filter>
            <filter id="edge" x="-2%" y="-2%" width="104%" height="104%"><feDropShadow dx="0" dy="0" stdDeviation="3" flood-color="#000" flood-opacity="0.250" /></filter>
          </defs>
          <path class="paper" d="M591 454.500h1670V1460H591z" filter="url(#edge)" />
          <g shape-rendering="crispEdges">
            <path v-for="l in gridV.filter((g) => !g.major)" :key="'v' + l.p" :d="`M${l.p} 455V1438`" stroke="#ececec" />
            <path v-for="l in gridH.filter((g) => !g.major)" :key="'h' + l.p" :d="`M592 ${l.p}H2261`" stroke="#ececec" />
            <path v-for="l in gridV.filter((g) => g.major)" :key="'V' + l.p" :d="`M${l.p} 455V1438`" stroke="#dcdcdc" />
            <path v-for="l in gridH.filter((g) => g.major)" :key="'H' + l.p" :d="`M592 ${l.p}H2261`" stroke="#dcdcdc" />
          </g>
          <text x="1399.500" y="515" textLength="70.500" lengthAdjust="spacingAndGlyphs" class="wf">Wireflow</text>
          <path stroke="#b4bac6" stroke-width="2" d="M1345 522h193" />
          <text x="1350" y="535.500" textLength="170" class="by">Natália Miranda Alves | June 27, 2023</text>
          <text x="1192.500" y="550" textLength="159" lengthAdjust="spacingAndGlyphs" class="big-title">Tetris</text><text x="1359" y="550" textLength="157.500" lengthAdjust="spacingAndGlyphs" class="big-title">Game</text>
          <g class="box">
            <rect x="669" y="621.500" width="206" height="365.500" /><rect x="989" y="621.500" width="206" height="365.500" />
            <rect x="1309" y="613" width="206" height="367" /><rect x="1628.800" y="1083" width="206.500" height="380" /><rect x="1949.500" y="1083" width="206" height="380" />
            <rect x="706.800" y="749.500" width="148.500" height="38.500" rx="5" /><rect x="713.500" y="796.500" width="116.500" height="39" rx="5" />
            <rect x="1007.500" y="665" width="169" height="232" rx="5" />
            <rect x="1308.500" y="607.500" width="206" height="77" rx="4" /><rect x="1312.500" y="742.500" width="103" height="77" rx="4" /><rect x="1415.500" y="821" width="87" height="77.500" rx="4" />
          </g>
          <g fill="none" stroke-width="2">
            <path stroke="#3a3a3a" stroke-width="1" d="M1176.500 718H1489q8 0 8 8v86" /><path stroke="#ffa79f" d="M1176.500 848H1298" />
            <path stroke="#98c8ea" d="M1415.500 972v53q0 8-8 8H779.700q-8 0-8-8v-28" /><path stroke="#fdcf61" d="M1350.500 972v285.500q0 8 8 8H1616" />
          </g>
          <path fill="#333" d="M1493.200 810h7.600l-3.800 10.500z" /><path fill="#ffa79f" d="M1295 844v8l12-4z" /><path fill="#98c8ea" d="M767.700 1001h8l-4-13z" /><path fill="#fdcf61" d="M1615 1261.500v8l12.500-4z" />
          <circle cx="1350.500" cy="960" r="12.700" fill="#fdd066" /><circle cx="1415.500" cy="960" r="12.700" fill="#a0ccec" /><circle cx="1479.500" cy="958" r="12.700" fill="#ffaba0" /><circle cx="1737.500" cy="1265.500" r="12.700" fill="#fdd066" />
          <text v-for="l in labels" :key="l.t" :x="l.x" :y="l.y" :textLength="l.w" lengthAdjust="spacingAndGlyphs" class="lb" :class="l.c">{{ l.t }}</text>
          <path stroke="#8c86ee" d="M1401 708.500h73.500" />

          <rect x="2304" y="455" width="300" height="527" rx="7" fill="#fafafa" filter="url(#soft)" />
          <g class="tips">
            <text x="2333.500" y="488" textLength="250.500" class="hd">Learn how to edit this template</text>
            <text x="2329.500" :y="tip(0)">1.</text><text x="2358.500" :y="tip(0)"><tspan class="b">Add text to a shape</tspan> by selecting</text>
            <text x="2358.500" :y="tip(1)">and typing.</text>
            <text x="2329.500" :y="tip(2)">2.</text><text x="2358.500" :y="tip(2)">To <tspan class="b">format shapes</tspan> as you'd like,</text>
            <text x="2358.500" :y="tip(3)">click on a shape and then click</text>
            <text x="2358.500" :y="tip(4)">"Shape Options"</text><text x="2482.500" :y="tip(4)">, "Fill Color"</text>
            <text x="2358.500" :y="tip(5)">and "Line Color"</text><text x="2477.500" :y="tip(5)">on the properties</text>
            <text x="2358.500" :y="tip(6)">bar at the top of the canvas.</text>
            <text x="2329.500" :y="tip(7)">3.</text><text x="2358.500" :y="tip(7)">Hover over a shape and click on</text>
            <text x="2358.500" :y="tip(8)">any red circle</text><text x="2459.500" :y="tip(8)">to <tspan class="b">add lines</tspan>.</text>
            <text x="2329.500" :y="tip(9)" class="b">4.</text><text x="2358.500" :y="tip(9)"><tspan class="b">Add text to a line</tspan> by</text>
            <text x="2358.500" :y="tip(10)">double-clicking the text or anywhere</text>
            <text x="2358.500" :y="tip(11)">on the line and typing.</text>
            <text x="2329.500" :y="tip(12)">5.</text><text x="2350.500" :y="tip(12)">To <tspan class="b">format lines,</tspan> click on a line and</text>
            <text x="2350.500" :y="tip(13)">use the properties bar at the top of</text>
            <text x="2350.500" :y="tip(14)">the canvas.</text>
            <path fill="none" stroke="#3f4a56" stroke-width="1.400" d="M2470 576.500h10v10h-10zM2475 574.500v14M2468.500 581.500h13" />
            <path fill="#222" d="M2463 604l1.500-4.500 6-4.500 2.500 3-6 4.500z" /><path stroke="#888" d="M2464 604.500h10" />
            <circle cx="2451" cy="651" r="3" fill="none" stroke="#d21f45" stroke-width="1.500" />
            <text x="2429.500" y="802.500" textLength="59" class="tut">Tutorials</text>
            <text x="2353" y="823.500" textLength="212">(Hold Shift + ⌘ or Ctrl, then click)</text>
          </g>
          <rect x="2330" y="842" width="300" height="52" rx="14" fill="#6f7681" filter="url(#soft)" />
          <text x="2358.500" y="871" textLength="203" class="watch">Watch Lucidchart basic tutorials</text>
          <rect x="2330" y="909" width="300" height="52" rx="14" fill="#4797ff" filter="url(#soft)" />
          <text x="2394.500" y="931" textLength="129" class="ex">See an example</text>
          <text x="2363.500" y="949" textLength="190.500" class="exs">(Hold Shift + ⌘ or Ctrl, then click)</text>
          <path fill="#fafafa" fill-opacity="0.600" stroke="#b8b8b8" stroke-opacity="0.850" stroke-width="2" d="M2261 456h74q3 0 3 3v68q0 3-3 3h-74z" />
          <path fill="none" stroke="#b5b6b7" stroke-width="6.500" stroke-linecap="round" stroke-linejoin="round" d="M2276 493h46M2288 480.500L2275 493l13 12.500M2310 480.500l13 12.500-13 12.500" />
          <path stroke="#e3e3e3" stroke-width="4" stroke-linecap="round" d="M2548 880l7 8M2549 896l8 2" />
          <rect x="2543" y="732" width="13.500" height="328" rx="6.500" fill="#969ea9" fill-opacity="0.800" stroke="#fff" stroke-opacity="0.500" />
          <rect x="1202" y="1421" width="700" height="14" rx="6" fill="#b0b5be" fill-opacity="0.650" stroke="#e0e2e6" stroke-width="2" stroke-opacity="0.700" />
        </svg>
      </div>
    </main>

    <footer class="status">
      <Ic n="list" :w="36" /><Ic n="grid4" :w="36" />
      <div class="page-tab"><span v-fit="116">Wireflow</span><span class="tri white"></span></div>
      <Ic n="plusCircle" :w="36" />
      <span class="hint"><span v-fit="645">Right click and drag to move around the canvas.</span></span>
      <div class="sel"><Ic n="select" :w="38" :ht="40" /><span v-fit="108">Selected</span></div>
      <span class="pct">50%</span><Ic class="zin" n="zoomIn" :w="28" />
      <div class="fs"><Ic n="full" :w="36" /></div>
      <div class="survey">
        <div class="ask"><p><span v-fit="332">How would you rate your</span><br><span v-fit="372">overall satisfaction with this</span><br><span v-fit="132">template?</span></p><Ic n="xLight" :w="24" /></div>
        <div class="stars"><Ic v-for="s in 5" :key="s" n="starBlue" :w="36" /></div>
      </div>
    </footer>

    <div class="taskbar">
      <div class="weather"><Ic n="weather" :w="50" :ht="40" /><span class="alert">1</span><div class="wt"><span v-fit="46">76°F</span><br><span v-fit="150" class="dim">Mostly cloudy</span></div></div>
      <div class="apps">
        <Ic n="windows" :w="46" />
        <div class="find"><Ic n="glass" :w="31" /><span v-fit="83">Search</span><Ic n="bing" :w="40" /></div>
        <Ic n="taskview" :w="48" :ht="44" /><Ic n="chat" :w="46" />
        <div class="app on"><Ic n="chrome" :w="48" /><span class="pill"></span></div>
        <Ic n="folder" :w="48" :ht="43" />
        <div class="app"><Ic n="vscode" :w="48" /><span class="pill idle"></span></div>
      </div>
      <div class="tray">
        <Ic n="chevUp" :w="22" :ht="14" /><Ic n="wifi" :w="32" :ht="24" /><Ic n="volume" :w="34" :ht="24" /><Ic n="battery" :w="33" :ht="28" />
        <div class="clock"><span v-fit="87">2:39 PM</span><br><span v-fit="112">6/27/2023</span></div><span class="count">3</span>
      </div>
    </div>
  </div>
</template>

<style>
body { margin: 0; overflow: hidden; }
</style>

<style scoped>
.screen { width: 2560px; height: 1600px; display: flex; flex-direction: column; overflow: hidden; background: #fff; color: #282c33; font-family: Inter, "Liberation Sans", sans-serif; font-size: 28px; white-space: nowrap; }
.screen > * { flex: none; }
svg { flex: none; display: block; overflow: visible; }
.tri { width: 16px; height: 12px; background: #282c33; clip-path: polygon(0 0, 100% 0, 50% 100%); flex: none; }

.tabstrip, .address, .bookmarks, .taskbar { font-family: "Noto Sans", "Open Sans", sans-serif; }
.tabstrip { height: 68px; background: #dee1e6; display: flex; align-items: center; padding-left: 18px; box-sizing: border-box; }
.tab { width: 222.200px; height: 68px; box-sizing: border-box; display: flex; align-items: center; padding-left: 22px; color: #3f4246; font-size: 24px; position: relative; }
.tab:nth-child(-n + 3) { width: 224px; }
.tab::after { content: ""; position: absolute; right: 0; top: 15px; width: 2px; height: 40px; background: #84878c; }
.tab.active { background: #fff; border-radius: 16px 16px 0 0; }
.tab.active::after, .tab:has(+ .active)::after { display: none; }
.tab.active::before { content: ""; position: absolute; left: -16px; right: -16px; bottom: 0; height: 16px; background: radial-gradient(circle at 0 0, transparent 15.500px, #fff 16px) left / 16px 16px no-repeat, radial-gradient(circle at 100% 0, transparent 15.500px, #fff 16px) right / 16px 16px no-repeat; }
.tab-title { margin: -2px 12px 0 16px; width: 98px; overflow: hidden; mask-image: linear-gradient(90deg, #000 62%, transparent); }
.tab:nth-child(-n + 3) .tab-title { margin-right: 14px; }
.tab-title.short { width: 52px; margin-right: 15px; }
.audio { margin-right: 24px; }
.newtab { margin-left: 31px; }
.winctl { flex: 1; display: grid; grid-template-columns: 91px 92px 92px 20px; margin-left: 151px; align-items: center; height: 58px; align-self: flex-start; }

.address { height: 72px; display: flex; align-items: center; }
.address > svg:nth-child(1) { margin-left: 30px; }
.address > svg:nth-child(2) { margin-left: 36px; }
.address > svg:nth-child(3) { margin-left: 36px; }
.omnibox { margin-left: 29px; width: 2000px; height: 56px; border-radius: 28px; background: #f1f3f4; display: flex; align-items: center; color: #64676b; font-size: 27px; }
.omnibox > svg:first-child { margin-left: 28px; }
.url { margin-left: 24px; }
.url b { font-weight: 400; color: #202124; }
.share-ic { margin: 0 33px 0 auto; }
.omnibox > svg:last-child { margin-right: 20px; }
.extensions { margin-left: 29px; display: flex; align-items: center; }
.extensions svg:nth-child(2) { margin-left: 32px; }
.extensions svg:nth-child(3) { margin-left: 32px; }
.extensions svg:nth-child(4) { margin-left: 28px; }
.extensions svg:nth-child(5) { margin-left: 37px; }
.bookmarks { height: 64px; padding: 0 0 8px 28px; box-sizing: border-box; display: flex; align-items: center; font-size: 23.500px; color: #3f4246; }
.bm { display: flex; align-items: center; gap: 17px; margin-right: 32px; }
.bm > span:last-child { margin-top: -2px; }
.fav { position: relative; display: grid; place-items: center; }
.fav i { position: absolute; font: 700 24px "Liberation Sans", sans-serif; color: #fff; }
.fav.small { margin: 0 4px; }
.fav.small i { font-size: 16px; }
.more-bm { margin: -6px 38px 0 auto; font-size: 27px; }

.app-head { height: 132px; box-sizing: border-box; border-top: 2px solid #dcdde0; border-bottom: 2px solid #dfe1e5; background: #fafbfe; display: flex; position: relative; }
.logo { margin: 44px 0 0 38px; }
.doc { margin-left: 39px; padding-top: 17px; }
.title-row { height: 48px; display: flex; align-items: center; }
h1, h2 { margin: 0; font-size: 36px; font-weight: 700; line-height: 1; }
h1 { width: 178px; font-weight: 600; }
.dot { width: 16px; height: 16px; border-radius: 8px; background: #0d82c4; margin: 0 17px 0 38px; }
.title-row .tri { margin-left: 17px; }
.menu { height: 48px; margin-left: -2px; display: grid; align-items: center; grid-template-columns: 79px 83px 117px 96px 109px 140px 109px 75px 54px 96px 49px 90px; font-size: 27px; }
.violet { margin: 0; background: #3c3fc1; }
.saved { border-bottom: 2px solid #282c33; width: 82px; line-height: 28px; margin-top: 3px; }
.head-right { position: absolute; left: 1834px; top: 32px; height: 64px; display: flex; align-items: center; }
.head-right > svg:nth-child(2) { margin-left: 32px; }
.vsep { width: 2px; height: 48px; background: #dfe1e5; margin: 0 44px 0 34px; }
.head-right > svg:nth-child(5) { margin-left: 42px; }
.share-btn { margin-left: 38px; width: 278px; height: 64px; box-sizing: border-box; border-radius: 7px; border: 2px solid #3c3fc1; display: flex; background: #3c3fc1; overflow: hidden; }
.share-main { width: 210px; display: flex; align-items: center; gap: 20px; padding-left: 36px; box-sizing: border-box; color: #fff; font-weight: 600; font-size: 28px; }
.share-link { flex: 1; background: #fafbfe; display: grid; place-items: center; }
.user { width: 64px; height: 64px; border-radius: 32px; margin-left: 32px; background: #ef6056; color: #000; font-weight: 600; font-size: 28px; display: grid; place-items: center; }
.banner { position: absolute; left: 984px; top: 0; width: 592px; height: 72px; border-radius: 0 0 5px 5px; background: #f96b13; color: #fff; display: flex; align-items: center; box-shadow: 0 4px 8px rgba(0, 0, 0, .5); }
.promo { margin: 4px 48px 0 50px; border-bottom: 2px solid #fff; line-height: 29px; }

.toolbar { height: 82px; box-sizing: border-box; border-bottom: 2px solid #dfe1e5; display: flex; }
.group { display: flex; align-items: center; border-right: 2px solid #dfe1e5; box-sizing: border-box; }
.g1 { width: 148px; padding-left: 22px; gap: 31px; }
.g2 { width: 78px; padding-left: 20px; }
.g3 { width: 1174px; padding-left: 8px; }
.g4 { flex: 1; border: 0; padding-left: 18px; }
.select { height: 48px; box-sizing: border-box; border: 2px solid #9aa1ad; border-radius: 7px; display: flex; align-items: center; justify-content: space-between; padding: 0 16px; }
.body-sel { width: 272px; font-size: 27px; }
.font-sel { width: 300px; margin-left: 8px; font: 28px "Liberation Sans", sans-serif; }
.stepper { width: 160px; height: 48px; box-sizing: border-box; margin-left: 8px; border: 2px solid #9aa1ad; border-radius: 7px; display: grid; grid-template-columns: 39px 1fr 39px; align-items: center; text-align: center; }
.stepper b { font-weight: 500; }
.pt { border: solid #9aa1ad; border-width: 0 2px; line-height: 44px; text-align: right; padding-right: 5px; }
.glyph { font-size: 38px; line-height: 46px; height: 46px; text-align: center; position: relative; }
.bold { font-weight: 700; width: 34px; margin-left: 20px; font-size: 37px; }
.ital { font-family: "Liberation Mono", monospace; font-style: italic; width: 34px; margin: 2px 0 0 34px; font-size: 42px; }
.under { width: 36px; margin-left: 33px; font-size: 31px; text-decoration: underline; text-underline-offset: 6px; text-decoration-thickness: 2px; line-height: 38px; }
.glyph.inked { width: 36px; margin-left: 32px; font-size: 36px; line-height: 48px; }
.inked { position: relative; }
.inked::after { content: ""; position: absolute; left: 0; right: 0; bottom: -11px; height: 8px; background: #333; }
.align { margin-left: 33px; }
.tee { width: 30px; margin-left: 31px; font-size: 36px; line-height: 48px; }
.tiny { width: 11px; height: 8px; margin-left: -2px; }
.g4 > svg:nth-child(2) { margin-left: 29px; }
.pen { margin-left: 30px; }
.pen::after { bottom: -15px; left: 1px; right: 1px; }
.g4 > svg:nth-child(4) { margin-left: 35px; }
.g4 > svg:nth-child(5) { margin-left: 36px; }
.g4 > svg:nth-child(6) { margin-left: 25px; }
.linebox { margin-left: 17px; width: 256px; height: 48px; box-sizing: border-box; border: 2px solid #9aa1ad; border-radius: 7px; display: flex; }
.linestyle { width: 118px; box-sizing: border-box; border-right: 2px solid #9aa1ad; display: flex; align-items: center; gap: 12px; padding-left: 20px; }
.px { flex: 1; display: flex; align-items: center; justify-content: flex-end; gap: 16px; padding-right: 14px; font-size: 27px; }
.elbow { margin-left: 19px; }
.more { margin-left: 279px; display: flex; flex-direction: column; align-items: center; gap: 20px; font-size: 22px; line-height: 24px; padding-top: 19px; }
.panel-ic { margin-left: 31px; }

.work { height: 1020px; display: flex; }
.rail { width: 82px; box-sizing: border-box; border-right: 2px solid #dfe1e5; display: flex; flex-direction: column; align-items: center; padding-top: 20px; position: relative; }
.chosen { width: 64px; height: 64px; margin-top: 20px; border-radius: 7px; background: #dedeff; display: grid; place-items: center; }
.rail > svg:nth-child(3) { margin-top: 22px; }
.rail > svg:nth-child(4) { margin-top: 38px; }
.rail > svg:nth-child(5) { margin-top: 36px; }
.rail > svg:nth-child(6) { margin-top: 32px; }
.pulse { position: absolute; left: 33px; top: 361px; width: 62px; height: 62px; border-radius: 31px; background: rgba(60, 63, 193, .17); z-index: 2; }
.panel { width: 430px; box-sizing: border-box; border-right: 2px solid #dfe1e5; display: flex; flex-direction: column; }
.panel-head { height: 80px; box-sizing: border-box; border-bottom: 2px solid #dfe1e5; display: flex; align-items: center; justify-content: space-between; padding: 2px 35px 0 32px; }
.basics { height: 122px; border-bottom: 2px solid #dfe1e5; }
.basics svg { overflow: hidden; }
.lib { height: 404px; border-bottom: 2px solid #dfe1e5; position: relative; }
.lib-head { height: 105px; display: flex; align-items: center; padding: 0 44px 0 36px; }
.grey { background: #6f7681; }
.lib-name { margin: 0 auto 0 16px; font-size: 28px; }
.shape-grid { display: grid; grid-template-columns: repeat(5, 77px); grid-auto-rows: 70px; margin-left: 21px; justify-items: center; align-items: center; margin-top: -4px; }
.thumb { position: absolute; right: 4px; top: 52px; width: 12px; height: 314px; border-radius: 6px; background: #c9ccd2; }
.containers { height: 174px; }
.containers .shape-grid { margin-top: -5px; }
.more-shapes { height: 121px; border-bottom: 2px solid #dfe1e5; display: flex; flex-direction: column; align-items: center; padding-top: 23px; }
.more-shapes svg { overflow: hidden; margin-left: 4px; }
.more-shapes button { width: 336px; height: 64px; border: 0; border-radius: 7px; background: #3c3fc1; color: #fff; font: 700 27px Inter, sans-serif; padding: 0; }
.import { flex: 1; display: flex; align-items: center; justify-content: center; gap: 24px; font-size: 31px; padding: 2px 0 0 3px; }
.canvas { width: 2048px; height: 1020px; background: #f1f2f4; overflow: hidden; }
.paper { fill: #fff; }
text { font-family: "Liberation Sans", Arial, sans-serif; fill: #333; }
.lb { font-size: 12px; }
.big { font-size: 14.600px; }
.it { font-style: italic; }
.box rect { fill: #fff; stroke: #4a4a4a; stroke-width: 1.200px; }
.big-title { font-size: 60px; font-weight: 700; }
.wf { font-size: 17px; font-weight: 700; fill: #b8bdc8; }
.by { font-size: 10px; fill: #c3c6cf; }
.tips text { font-size: 14.200px; font-style: italic; }
.tips .b { font-weight: 700; }
.tips .hd { font-size: 17px; font-weight: 700; font-style: normal; }
.tips .tut { font-weight: 700; font-style: normal; }
.watch { font-size: 14px; fill: #fff; }
.ex { font-size: 17px; font-weight: 700; fill: #fff; }
.exs { font-size: 13px; font-style: italic; fill: #fff; }

.status { height: 66px; box-sizing: border-box; border-top: 2px solid #dfe1e5; background: #fafbfe; display: flex; align-items: center; position: relative; padding-left: 26px; }
.status > svg:nth-child(2) { margin-left: 36px; }
.page-tab { align-self: flex-start; margin: 0 28px 0 36px; width: 201px; height: 56px; box-sizing: border-box; background: #6f7681; color: #fff; border-radius: 0 0 7px 7px; display: flex; align-items: center; justify-content: space-between; padding: 0 17px 0 16px; font-family: "Noto Sans", sans-serif; font-size: 27px; }
.white { background: #fff; width: 14px; height: 11px; margin-top: -4px; }
.hint { margin-left: 568px; font-size: 27px; padding-top: 1px; }
.sel { margin-left: 31px; border-left: 2px solid #dfe1e5; height: 64px; display: flex; align-items: center; gap: 13px; padding-left: 22px; font-size: 27px; }
.pct { width: 100px; margin-left: 410px; text-align: right; font-size: 26px; }
.zin { margin-left: 52px; }
.fs { margin-left: 25px; padding-left: 23px; border-left: 2px solid #dfe1e5; height: 64px; display: grid; align-items: center; }
.survey { position: absolute; left: 1841px; bottom: 0; width: 514px; height: 260px; border-radius: 16px 16px 0 0; background: #282c33; color: #fff; box-shadow: 0 0 20px rgba(0, 0, 0, .15); box-sizing: border-box; padding: 39px 32px 0 39px; }
.ask { display: flex; justify-content: space-between; align-items: flex-start; }
.ask p { margin: 0; line-height: 40px; font-size: 28px; }
.ask svg { margin-top: -7px; }
.stars { display: flex; justify-content: space-between; margin: 27px 36px 0 5px; }

.taskbar { height: 96px; box-sizing: border-box; border-top: 2px solid #4a4038; background: linear-gradient(90deg, #302019, #33221a 20%, #2c2018 55%, #301e14 75%, #2a201b); color: #fff; display: flex; align-items: center; font-size: 23.500px; }
.weather { display: flex; align-items: center; padding-left: 37px; width: 775px; box-sizing: border-box; position: relative; }
.alert { position: absolute; left: 60px; top: -1px; width: 32px; height: 32px; border-radius: 16px; background: #c42b1c; font-size: 22px; line-height: 31px; text-align: center; }
.wt { margin: -3px 0 0 14px; line-height: 32px; }
.weather > svg { margin-top: 2px; }
.dim { color: #cfc9c5; }
.apps { display: flex; align-items: center; margin-left: 37px; }
.find { width: 436px; height: 60px; box-sizing: border-box; margin: 0 26px 0 29px; border-radius: 30px; background: #f4f3f1; color: #5c5c5c; display: flex; align-items: center; padding: 0 9px 0 19px; }
.find span { margin: -2px auto 0 21px; font-size: 26px; }
.apps > svg:nth-child(4) { margin-left: 41px; }
.app { width: 80px; height: 80px; margin-left: 25px; border-radius: 8px; box-sizing: border-box; display: grid; place-items: center; position: relative; }
.on { background: #41322a; border: 2px solid #48392f; }
.apps > svg:nth-child(6) { margin-left: 24px; }
.pill { position: absolute; bottom: 0; width: 32px; height: 6px; border-radius: 3px; background: #4cc2ff; }
.idle { width: 12px; background: #a19690; bottom: 2px; }
.tray { margin-left: auto; margin-right: 40px; display: flex; align-items: center; }
.tray svg:nth-child(2) { margin-left: 38px; }
.tray svg:nth-child(3) { margin-left: 16px; }
.tray svg:nth-child(4) { margin-left: 13px; }
.clock { margin: -3px 0 0 31px; text-align: right; line-height: 32px; width: 112px; }
.count { margin-left: 14px; width: 32px; height: 32px; border-radius: 16px; background: #4cc2ff; color: #1c1c1c; font-size: 20px; line-height: 32px; text-align: center; }
</style>
